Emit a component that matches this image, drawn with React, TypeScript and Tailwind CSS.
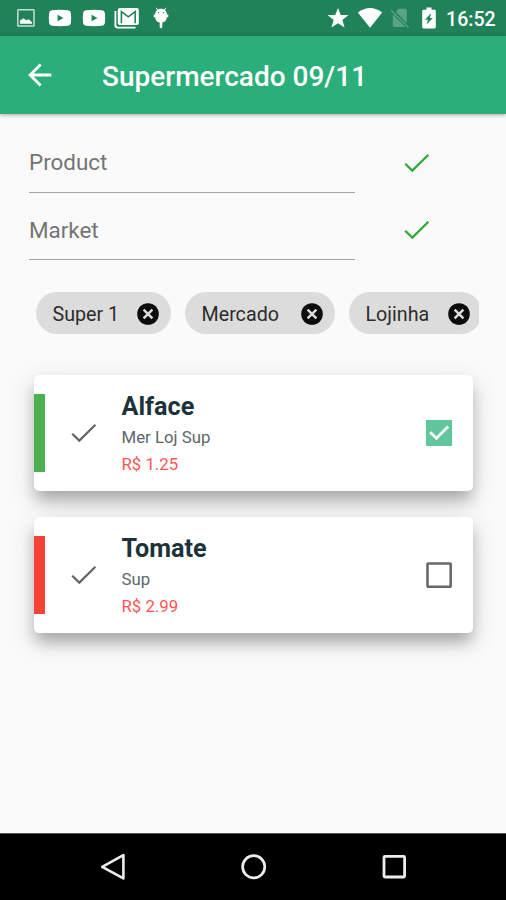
import { ReactNode } from "react";

function Check({ className, stroke }: { className: string; stroke: string }) {
  return (
    <svg viewBox="0 0 26 20" className={`h-5 w-[26px] shrink-0 ${className}`} fill="none" stroke={stroke} strokeWidth="2.2">
      <path d="M1.2 10.8 8.3 17.6 24.4 1.8" />
    </svg>
  );
}

function YouTube({ className }: { className: string }) {
  return (
    <svg viewBox="0 0 24 18" className={`h-[18px] w-6 shrink-0 ${className}`}>
      <path
        fill="#fff"
        fillRule="evenodd"
        d="M4 1.2Q12 .3 20 1.2Q22.5 1.5 22.9 4Q23.5 9 22.9 14Q22.5 16.4 20 16.8Q12 17.6 4 16.8Q1.5 16.5 1.1 14Q.5 9 1.1 4Q1.5 1.5 4 1.2ZM9.6 5.8V12.2L15.4 9Z"
      />
    </svg>
  );
}

function StatusBar() {
  return (
    <div className="flex h-9 items-center bg-[#208259]">
      <svg viewBox="0 0 18 18" className="ml-[16.5px] h-[18px] w-[18px] shrink-0" fill="none">
        <rect x=".8" y=".8" width="16.2" height="16.2" rx=".6" stroke="#c5dfd1" strokeWidth="1.5" />
        <path d="M3 14.8V11.5L6.5 9.2 9.3 11.3 11.8 10.3 15 13.2V14.8Z" fill="#fff" />
      </svg>
      <YouTube className="ml-[13px]" />
      <YouTube className="ml-[10px]" />
      <svg viewBox="0 0 26 22" className="ml-[8.5px] h-[22px] w-[26px] shrink-0" fill="none">
        <path d="M1.4 4V18.3Q1.4 20.6 3.7 20.6H21.5" stroke="#fff" strokeWidth="1.8" />
        <rect x="3.8" y="1" width="21" height="17" rx="2" fill="#fff" />
        <path d="M7.4 16.3V4.6L14.3 9.8 21.2 4.6V16.3" stroke="#208259" strokeWidth="1.6" />
      </svg>
      <svg viewBox="0 0 16 22" className="ml-[12.5px] h-[22px] w-4 shrink-0">
        <path d="M3 .8 5 3.3M13 .8 11 3.3" stroke="#fff" strokeWidth="1" />
        <path
          fill="#fff"
          d="M8 1.8C11.7 1.8 13.8 4.2 13.8 7.2V7.6H15.3V10.2H13.8C13.5 13.5 11.8 15.2 9.3 15.6V20Q9.3 21.3 8 21.3T6.7 20V15.6C4.2 15.2 2.5 13.5 2.2 10.2H.7V7.6H2.2V7.2C2.2 4.2 4.3 1.8 8 1.8Z"
        />
        <circle cx="5.5" cy="5.6" r=".7" fill="#208259" />
        <circle cx="10.5" cy="5.6" r=".7" fill="#208259" />
      </svg>
      <svg viewBox="0 0 22 20" className="ml-auto h-5 w-[22px] shrink-0">
        <path fill="#fff" d="M11 0 13.8 7H21.5L15.4 11.9 17.6 19.6 11 15.2 4.4 19.6 6.6 11.9 .5 7H8.2Z" />
      </svg>
      <svg viewBox="0 0 26 20" className="ml-[8px] h-5 w-[26px] shrink-0">
        <path fill="#fff" d="M.8 4.6Q13-4.6 25.2 4.6L13 19.7Z" />
      </svg>
      <svg viewBox="0 0 20 20" className="ml-[7px] h-5 w-5 shrink-0">
        <path fill="#5ba384" d="M8.2.8H15.2Q16.8.8 16.8 2.4V15L6 4ZM2.8 6.6 15.4 19H4.4Q2.8 19 2.8 17.4Z" />
        <path d="M.8 2 18.6 19.6" stroke="#5ba384" strokeWidth="1.4" />
      </svg>
      <svg viewBox="0 0 14 22" className="ml-[12px] h-[22px] w-[14px] shrink-0">
        <path fill="#fff" d="M4.5.4H9.5V2.7H12.5Q13.8 2.7 13.8 4V20Q13.8 21.4 12.5 21.4H1.5Q.2 21.4.2 20V4Q.2 2.7 1.5 2.7H4.5Z" />
        <path fill="#208259" d="M9.2 6 3 12.8H6L4.6 17.5 10.8 11H7.8Z" />
      </svg>
      <span className="ml-[10px] mr-[11px] w-[49px] pt-[3px] text-[19.6px] leading-[33px] font-medium whitespace-nowrap text-white">16:52</span>
    </div>
  );
}

function Field({ label, className, lift }: { label: string; className: string; lift: string }) {
  return (
    <div className={`flex items-start ${className}`}>
      <div className={`h-[44px] w-[326px] border-b border-[#a2a2a2] text-[22.4px] text-[#747474] ${lift}`}>{label}</div>
      <Check className="ml-[49px] mt-[4px]" stroke="#31a838" />
    </div>
  );
}

function Chip({ label, className }: { label: string; className: string }) {
  return (
    <div className={`flex h-[42px] shrink-0 items-center justify-between rounded-full bg-[#dcdcdc] pr-3 pl-[16.5px] ${className}`}>
      <span className="pt-[3px] text-[19.7px] text-[#2c2c2c]">{label}</span>
      <svg viewBox="0 0 22 22" className="mt-[2px] h-[22px] w-[22px]">
        <circle cx="11" cy="11" r="10.8" fill="#0c0c0c" />
        <path d="M6.6 6.6 15.4 15.4M15.4 6.6 6.6 15.4" stroke="#dcdcdc" strokeWidth="2.5" />
      </svg>
    </div>
  );
}

function ItemCard({ name, markets, price, bar, children }: { name: string; markets: string; price: string; bar: string; children: ReactNode }) {
  return (
    <div className="flex h-[116px] w-[439px] items-center rounded-[5px] bg-white shadow-[0_11px_15px_-2px_rgba(0,0,0,0.25),0_8px_26px_1px_rgba(0,0,0,0.13)]">
      <div className={`h-[78px] w-[11px] ${bar}`} />
      <Check className="ml-[26px]" stroke="#656565" />
      <div className="ml-[24.5px] flex flex-1 flex-col">
        <span className="text-[25.2px] leading-[35px] font-bold text-[#1d323b]">{name}</span>
        <span className="text-[16.8px] leading-[27px] text-[#5d676b]">{markets}</span>
        <span className="text-[16.8px] leading-[26px] text-[#ff5555]">{price}</span>
      </div>
      {children}
    </div>
  );
}

export default function App() {
  return (
    <div className="flex h-[900px] w-[506px] flex-col overflow-hidden bg-[#fafafa] font-['Roboto',sans-serif]">
      <StatusBar />
      <header className="flex h-[78px] items-center bg-[#2aae7a] shadow-[0_1px_4px_rgba(0,0,0,0.35)]">
        <svg viewBox="0 0 24 24" className="ml-[28px] h-6 w-6" fill="none" stroke="#fff" strokeWidth="2.8">
          <path d="M23.3 12H2.5M12.6 1.5 2.1 12 12.6 22.5" />
        </svg>
        <h1 className="ml-[50px] pt-[3px] text-[28px] font-medium whitespace-nowrap text-white">Supermercado 09/11</h1>
      </header>
      <main className="flex-1">
        <Field label="Product" className="mt-[35px] ml-[29px]" lift="leading-[26px]" />
        <Field label="Market" className="mt-[23px] ml-[29px]" lift="leading-[28px]" />
        <div className="mt-[32px] ml-[36px] flex w-[443px] gap-[14px] overflow-hidden">
          <Chip label="Super 1" className="w-[135px]" />
          <Chip label="Mercado" className="w-[150px]" />
          <Chip label="Lojinha" className="w-[133px]" />
        </div>
        <div className="mt-[41px] ml-[34px] flex flex-col gap-[26px]">
          <ItemCard name="Alface" markets="Mer Loj Sup" price="R$ 1.25" bar="bg-[#4caf50]">
            <svg viewBox="0 0 26 26" className="mr-[21px] h-[26px] w-[26px]">
              <rect width="26" height="26" rx=".8" fill="#62c69d" />
              <path d="M4.2 12.2 10.4 18.2 22.2 6.4" fill="none" stroke="#fff" strokeWidth="2.8" />
            </svg>
          </ItemCard>
          <ItemCard name="Tomate" markets="Sup" price="R$ 2.99" bar="bg-[#f44336]">
            <svg viewBox="0 0 26 26" className="mr-[21px] h-[26px] w-[26px]" fill="none">
              <rect x="1.5" y="1.5" width="23.2" height="23.2" rx=".6" stroke="#696969" strokeWidth="2.6" />
            </svg>
          </ItemCard>
        </div>
      </main>
      <nav className="flex h-[67px] items-center border-t border-[#555] bg-black">
        <svg viewBox="0 0 28 28" className="ml-[99px] h-7 w-7" fill="none" stroke="#ededed" strokeWidth="2.6" strokeLinejoin="round">
          <path d="M24.4 2.2V25.4L3.2 13.8Z" />
        </svg>
        <svg viewBox="0 0 28 28" className="ml-[113px] h-7 w-7" fill="none" stroke="#ededed" strokeWidth="2.7">
          <circle cx="13.7" cy="13.8" r="11.1" />
        </svg>
        <svg viewBox="0 0 28 28" className="ml-[112px] h-7 w-7" fill="none" stroke="#ededed" strokeWidth="2.8">
          <rect x="4" y="3.4" width="20.6" height="20.6" rx="1" />
        </svg>
      </nav>
    </div>
  );
}
